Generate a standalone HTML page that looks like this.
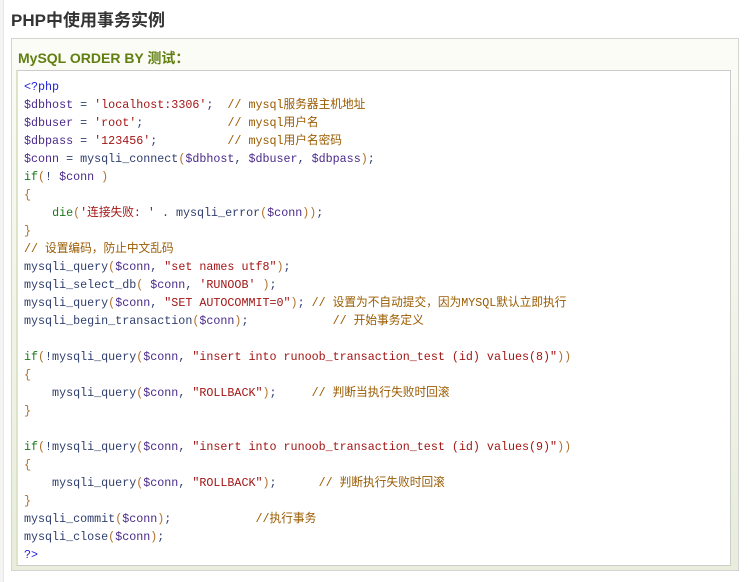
<!DOCTYPE html>
<html><head><meta charset="utf-8"><style>
body{margin:0;width:750px;height:582px;background:#fff;font-family:"Liberation Sans","Noto Sans CJK SC",sans-serif;position:relative;overflow:hidden}
.edge{position:absolute;left:0;top:0;width:3px;height:582px;background:#f4f4f4;border-right:1px solid #e6e6e6}
h2{position:absolute;left:11px;top:6px;margin:0;font-size:17px;font-weight:bold;color:#333}
.outer{position:absolute;left:11px;top:38px;width:726px;height:531px;border:1px solid #d4d4d4;background:linear-gradient(#fbfcf6,#e8eedb 95%);}
.t{position:absolute;left:6px;top:9px;font-size:14px;font-weight:bold;color:#617f10}
.inner{position:absolute;left:4px;top:31px;width:712px;height:494px;background:#fff;border:1px solid #ccc;border-left:2px solid #dde4c8}
pre{margin:0;position:absolute;left:6px;top:7px;font-family:"Liberation Mono","Noto Sans CJK SC",monospace;font-size:11.7px;line-height:18px;color:#2f3e6e}
.k{color:#1a7a1a}.s{color:#a31515}.c{color:#9a5b00}.v{color:#4a2a8a}.p{color:#b0702a}.b{color:#2222dd}
</style></head><body>
<div class="edge"></div>
<h2>PHP中使用事务实例</h2>
<div class="outer"><div class="t">MySQL ORDER BY 测试：</div>
<div class="inner"><pre><span class="b">&lt;?php</span>
<span class="v">$dbhost</span> = <span class="s">'localhost:3306'</span>;  <span class="c">// mysql服务器主机地址</span>
<span class="v">$dbuser</span> = <span class="s">'root'</span>;            <span class="c">// mysql用户名</span>
<span class="v">$dbpass</span> = <span class="s">'123456'</span>;          <span class="c">// mysql用户名密码</span>
<span class="v">$conn</span> = mysqli_connect<span class="p">(</span><span class="v">$dbhost</span>, <span class="v">$dbuser</span>, <span class="v">$dbpass</span><span class="p">)</span>;
<span class="k">if</span><span class="p">(</span>! <span class="v">$conn</span> <span class="p">)</span>
<span class="p">{</span>
    <span class="k">die</span><span class="p">(</span><span class="s">'连接失败: '</span> . mysqli_error<span class="p">(</span><span class="v">$conn</span><span class="p">)</span><span class="p">)</span>;
<span class="p">}</span>
<span class="c">// 设置编码，防止中文乱码</span>
mysqli_query<span class="p">(</span><span class="v">$conn</span>, <span class="s">"set names utf8"</span><span class="p">)</span>;
mysqli_select_db<span class="p">(</span> <span class="v">$conn</span>, <span class="s">'RUNOOB'</span> <span class="p">)</span>;
mysqli_query<span class="p">(</span><span class="v">$conn</span>, <span class="s">"SET AUTOCOMMIT=0"</span><span class="p">)</span>; <span class="c">// 设置为不自动提交，因为MYSQL默认立即执行</span>
mysqli_begin_transaction<span class="p">(</span><span class="v">$conn</span><span class="p">)</span>;            <span class="c">// 开始事务定义</span>

<span class="k">if</span><span class="p">(</span>!mysqli_query<span class="p">(</span><span class="v">$conn</span>, <span class="s">"insert into runoob_transaction_test (id) values(8)"</span><span class="p">)</span><span class="p">)</span>
<span class="p">{</span>
    mysqli_query<span class="p">(</span><span class="v">$conn</span>, <span class="s">"ROLLBACK"</span><span class="p">)</span>;     <span class="c">// 判断当执行失败时回滚</span>
<span class="p">}</span>

<span class="k">if</span><span class="p">(</span>!mysqli_query<span class="p">(</span><span class="v">$conn</span>, <span class="s">"insert into runoob_transaction_test (id) values(9)"</span><span class="p">)</span><span class="p">)</span>
<span class="p">{</span>
    mysqli_query<span class="p">(</span><span class="v">$conn</span>, <span class="s">"ROLLBACK"</span><span class="p">)</span>;      <span class="c">// 判断执行失败时回滚</span>
<span class="p">}</span>
mysqli_commit<span class="p">(</span><span class="v">$conn</span><span class="p">)</span>;            <span class="c">//执行事务</span>
mysqli_close<span class="p">(</span><span class="v">$conn</span><span class="p">)</span>;
<span class="b">?&gt;</span></pre></div></div>
</body></html>
